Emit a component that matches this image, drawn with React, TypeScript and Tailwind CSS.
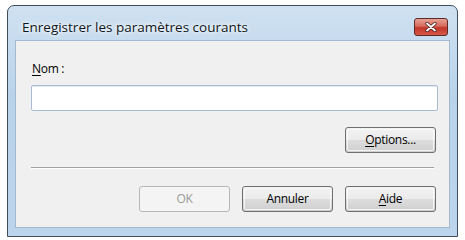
import React from "react";

function Btn({ children, disabled }: { children: React.ReactNode; disabled?: boolean }) {
  if (disabled) {
    return (
      <div className="w-[91px] h-[26px] rounded-[3px] border border-[#b5b8ba] bg-[#f4f4f4] flex items-center justify-center text-[#9a9a9a]">
        <span>{children}</span>
      </div>
    );
  }
  return (
    <div className="w-[91px] h-[26px] rounded-[3px] border border-[#6f6f6f] p-px bg-[linear-gradient(#f2f2f2_0%,#ebebeb_50%,#dddddd_51%,#cfcfcf_100%)]">
      <div className="w-full h-full rounded-[2px] border border-[#fbfbfb]/80 flex items-center justify-center text-black">
        <span>{children}</span>
      </div>
    </div>
  );
}

export default function App() {
  return (
    <div className="w-[465px] h-[240px] bg-white pt-[5px] pl-[7px] font-['Open_Sans','Liberation_Sans',sans-serif] text-[12px] tracking-[-0.3px]">
      <div className="w-[451px] h-[232px] rounded-t-[7px] border border-[#3e4e5e] bg-[linear-gradient(180deg,#cfe1f1_0%,#b9d3ea_40%,#bcd5ec_100%)] flex flex-col px-[7px] pb-[8px]">
        <div className="h-[34px] flex items-start shrink-0">
          <div className="pl-[7px] pt-[13px] text-[13.5px] tracking-normal leading-[17px] text-[#0e1620] [text-shadow:0_0_6px_#ffffff,0_0_3px_#ffffff]">
            Enregistrer les paramètres courants
          </div>
          <div className="ml-auto mt-[12px] mr-[2px] w-[34px] h-[18px] rounded-[3px] border border-[#5d2a26] bg-[linear-gradient(180deg,#e6a195_0%,#d66a5a_45%,#c1352a_55%,#d65a48_100%)] flex items-center justify-center">
            <svg width="12" height="10" viewBox="0 0 12 10">
              <path d="M2 1.5 L10 8.5 M10 1.5 L2 8.5" stroke="#3a1a18" strokeWidth="3.2" strokeLinecap="round" />
              <path d="M2 1.5 L10 8.5 M10 1.5 L2 8.5" stroke="#ffffff" strokeWidth="1.8" strokeLinecap="round" />
            </svg>
          </div>
        </div>
        <div className="flex-1 bg-[#f0f0f0] border border-[#a3b9cf] flex flex-col pl-[15px] pr-[13px] pb-[13px]">
          <div className="pt-[21px] pl-px leading-[14px] text-black">
            <span className="underline underline-offset-2">N</span>om :
          </div>
          <div className="mt-[9px] h-[26px] w-[407px] rounded-[2px] border border-[#a9bcd2] bg-white shadow-[inset_0_1px_0_#e3e9ef]" />
          <div className="mt-[16px] flex justify-end">
            <Btn>
              <span className="underline underline-offset-2">O</span>ptions...
            </Btn>
          </div>
          <div className="mt-[14px] mr-[2px] h-[2px] border-t border-[#a0a0a0] border-b border-b-white" />
          <div className="mt-[17px] flex justify-end gap-[12px]">
            <Btn disabled>OK</Btn>
            <Btn>Annuler</Btn>
            <Btn>
              <span className="underline underline-offset-2">A</span>ide
            </Btn>
          </div>
        </div>
      </div>
    </div>
  );
}
